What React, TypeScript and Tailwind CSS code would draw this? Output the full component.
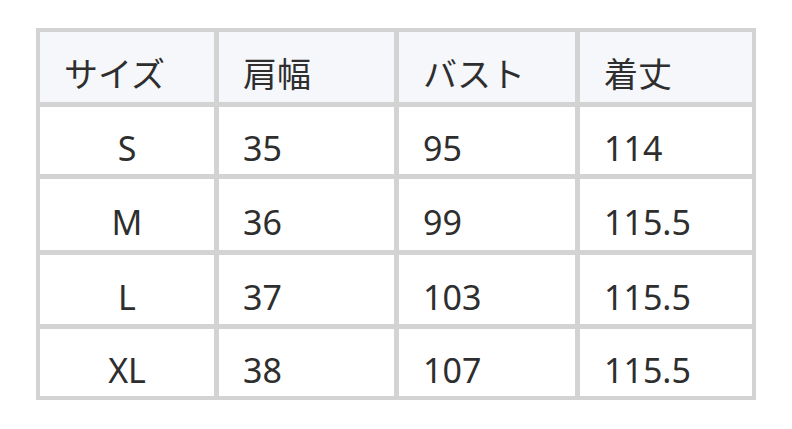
const headers = ['サイズ', '肩幅', 'バスト', '着丈'];

const rows: { cells: string[]; h: string }[] = [
  { cells: ['S', '35', '95', '114'], h: 'h-[67px]' },
  { cells: ['M', '36', '99', '115.5'], h: 'h-[71px]' },
  { cells: ['L', '37', '103', '115.5'], h: 'h-[69px]' },
  { cells: ['XL', '38', '107', '115.5'], h: 'h-[67px]' },
];

export default function App() {
  return (
    <div
      className="w-[792px] h-[429px] bg-white pl-[36px] pt-[28px] text-[#2e2e2e]"
      style={{ fontFamily: '"Noto Sans", "Noto Sans CJK JP", sans-serif' }}
    >
      <div className="inline-grid grid-cols-[174px_175px_176px_172px] gap-[5px] p-[4px] bg-[#d3d3d3] text-[34px] leading-none">
        {headers.map((h) => (
          <div key={h} className="h-[70px] bg-[#f6f7fb] flex items-center pl-[24px] pt-[14px]">
            {h}
          </div>
        ))}
        {rows.map((r) =>
          r.cells.map((c, i) => (
            <div
              key={r.cells[0] + i}
              className={`${r.h} bg-white flex items-center pt-[14px] ${i === 0 ? 'justify-center' : 'pl-[24px]'}`}
            >
              {c}
            </div>
          ))
        )}
      </div>
    </div>
  );
}
